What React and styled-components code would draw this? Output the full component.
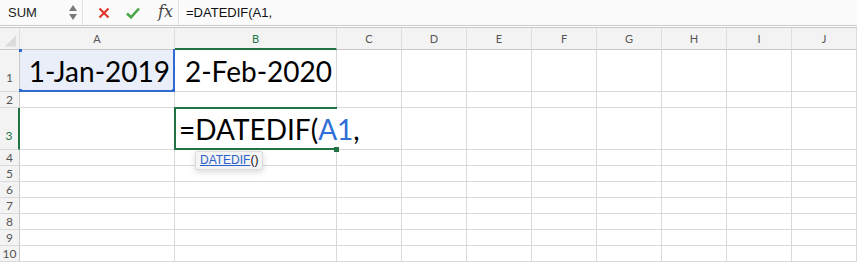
import React from 'react';
import styled, { createGlobalStyle } from 'styled-components';

const GlobalStyle = createGlobalStyle`
  html, body { margin: 0; padding: 0; background: #fff; }
  body { font-family: Lato, "Open Sans", sans-serif; }
`;

const green = '#217346';
const blue = '#2f6ad3';
const grid = '#d9d9d9';

const Page = styled.div`
  width: 857px;
  height: 262px;
  overflow: hidden;
  background: #fff;
`;

const Toolbar = styled.div`
  display: flex;
  align-items: center;
  height: 25px;
  background: #fbfbfb;
  border-bottom: 1px solid #c9c9c9;
  margin-bottom: 1px;
`;

const NameBox = styled.div`
  width: 83px;
  height: 100%;
  box-sizing: border-box;
  display: flex;
  align-items: center;
  justify-content: space-between;
  padding: 0 5px 0 8px;
  border-right: 1px solid #e0e0e0;
  font-family: "Liberation Sans", sans-serif;
  font-size: 13px;
  color: #222;
`;

const Arrows = styled.div`
  display: flex;
  flex-direction: column;
  gap: 3px;
`;

const IconGroup = styled.div`
  display: flex;
  align-items: center;
  height: 100%;
  padding-left: 15px;
  gap: 16px;
  width: 96px;
  box-sizing: border-box;
  border-right: 1px solid #e0e0e0;
`;

const Fx = styled.span`
  font-family: "DejaVu Serif", "Liberation Serif", serif;
  font-style: italic;
  font-size: 16px;
  color: #444;
  margin-left: 2px;
  margin-top: -2px;
`;

const FormulaText = styled.div`
  padding-left: 7px;
  font-family: "Liberation Sans", sans-serif;
  font-size: 13px;
  color: #111;
`;

const Sheet = styled.div`
  display: grid;
  grid-template-columns: 20px 155px 162px repeat(8, 65px);
  grid-template-rows: 22px 42px 16px 42px repeat(7, 16px);
  border-top: 1px solid #c6c6c6;
`;

const Head = styled.div`
  box-sizing: border-box;
  background: #f3f3f3;
  border-right: 1px solid #dedede;
  border-bottom: 1px solid ${p => (p.$active ? green : '#c9c9c9')};
  border-bottom-width: ${p => (p.$active ? '2px' : '1px')};
  display: flex;
  align-items: center;
  justify-content: center;
  font-size: 11px;
  color: ${p => (p.$active ? green : '#555')};
  position: relative;
`;

const RowHead = styled.div`
  box-sizing: border-box;
  background: #f3f3f3;
  border-bottom: 1px solid #dadada;
  border-right: ${p => (p.$active ? `2px solid ${green}` : '1px solid #c9c9c9')};
  display: flex;
  align-items: flex-end;
  justify-content: center;
  padding-bottom: ${p => (p.$tall ? '6px' : '0')};
  font-size: 12px;
  line-height: 15px;
  color: ${p => (p.$active ? green : '#555')};
`;

const Cell = styled.div`
  box-sizing: border-box;
  position: relative;
  border-right: 1px solid ${p => (p.$overflow ? 'transparent' : grid)};
  border-bottom: 1px solid ${grid};
  background: ${p => (p.$ref ? '#e9eef9' : '#fff')};
  display: flex;
  align-items: flex-end;
  justify-content: ${p => (p.$right ? 'flex-end' : 'flex-start')};
  padding: 0 4px 3px;
  font-size: 28px;
  line-height: 34px;
  color: #000;
  white-space: nowrap;
  overflow: visible;
  z-index: ${p => (p.$overflow ? 2 : 0)};
`;

const RefBox = styled.div`
  position: absolute;
  left: -1px;
  top: -1px;
  right: -1px;
  bottom: -1px;
  border-right: 2px solid ${blue};
  border-bottom: 2px solid ${blue};
  pointer-events: none;
`;

const Handle = styled.span`
  position: absolute;
  width: ${p => p.$size}px;
  height: ${p => p.$size}px;
  background: ${p => p.$color};
`;

const ActiveBox = styled.div`
  position: absolute;
  left: -1px;
  top: -1px;
  right: -1px;
  bottom: -1px;
  border: 2px solid ${green};
  border-right: none;
  pointer-events: none;
`;

const RefText = styled.span`
  color: #2f6fd6;
`;

const Tooltip = styled.div`
  position: absolute;
  left: 20px;
  top: 43px;
  padding: 2px 4px 2px;
  background: #f4f4f4;
  border: 1px solid #dcdcdc;
  border-radius: 2px;
  box-shadow: 0 2px 6px rgba(0, 0, 0, 0.15);
  font-family: "Liberation Sans", sans-serif;
  font-size: 12px;
  line-height: 13px;
  color: #111;
  z-index: 3;
`;

const Link = styled.span`
  color: #2a62c9;
  text-decoration: underline;
`;

const cols = ['A', 'B', 'C', 'D', 'E', 'F', 'G', 'H', 'I', 'J'];

const Corner = () => (
  <Head>
    <svg width="20" height="21" viewBox="0 0 20 21">
      <polygon points="17,7 17,19 5,19" fill="#dcdcdc" />
    </svg>
  </Head>
);

const Row = ({ n, tall, active, children }) => (
  <>
    <RowHead $tall={tall} $active={active}>{n}</RowHead>
    {children}
  </>
);

const emptyCells = count =>
  Array.from({ length: count }, (_, i) => <Cell key={i} />);

export default function App() {
  return (
    <Page>
      <GlobalStyle />
      <Toolbar>
        <NameBox>
          SUM
          <Arrows>
            <svg width="8" height="6" viewBox="0 0 8 6"><polygon points="4,0 8,6 0,6" fill="#7a7a7a" /></svg>
            <svg width="8" height="6" viewBox="0 0 8 6"><polygon points="0,0 8,0 4,6" fill="#7a7a7a" /></svg>
          </Arrows>
        </NameBox>
        <IconGroup>
          <svg width="12" height="12" viewBox="0 0 12 12">
            <path d="M1.5 1.5 L10.5 10.5 M10.5 1.5 L1.5 10.5" stroke="#e0372e" strokeWidth="2.2" />
          </svg>
          <svg width="14" height="12" viewBox="0 0 14 12">
            <path d="M1 6.5 L5 10.3 L13 1.5" stroke="#4aa546" strokeWidth="2.6" fill="none" />
          </svg>
          <Fx>fx</Fx>
        </IconGroup>
        <FormulaText>=DATEDIF(A1,</FormulaText>
      </Toolbar>
      <Sheet>
        <Corner />
        {cols.map(c => (
          <Head key={c} $active={c === 'B'}>{c}</Head>
        ))}

        <Row n={1} tall>
          <Cell $ref $right>
            1-Jan-2019
            <RefBox />
            <Handle $size={3} $color={blue} style={{ left: -1, top: -1 }} />
            <Handle $size={3} $color={blue} style={{ left: -1, bottom: -1 }} />
            <Handle $size={5} $color={blue} style={{ right: -3, bottom: -3 }} />
          </Cell>
          <Cell $right>2-Feb-2020</Cell>
          {emptyCells(8)}
        </Row>

        <Row n={2}>{emptyCells(10)}</Row>

        <Row n={3} tall active>
          <Cell />
          <Cell $overflow>
            =DATEDIF(<RefText>A1</RefText>,
            <ActiveBox />
            <Handle $size={5} $color={green} style={{ right: -3, bottom: -3 }} />
            <Tooltip>
              <Link>DATEDIF</Link>()
            </Tooltip>
          </Cell>
          {emptyCells(8)}
        </Row>

        {[4, 5, 6, 7, 8, 9, 10].map(n => (
          <Row key={n} n={n}>{emptyCells(10)}</Row>
        ))}
      </Sheet>
    </Page>
  );
}
